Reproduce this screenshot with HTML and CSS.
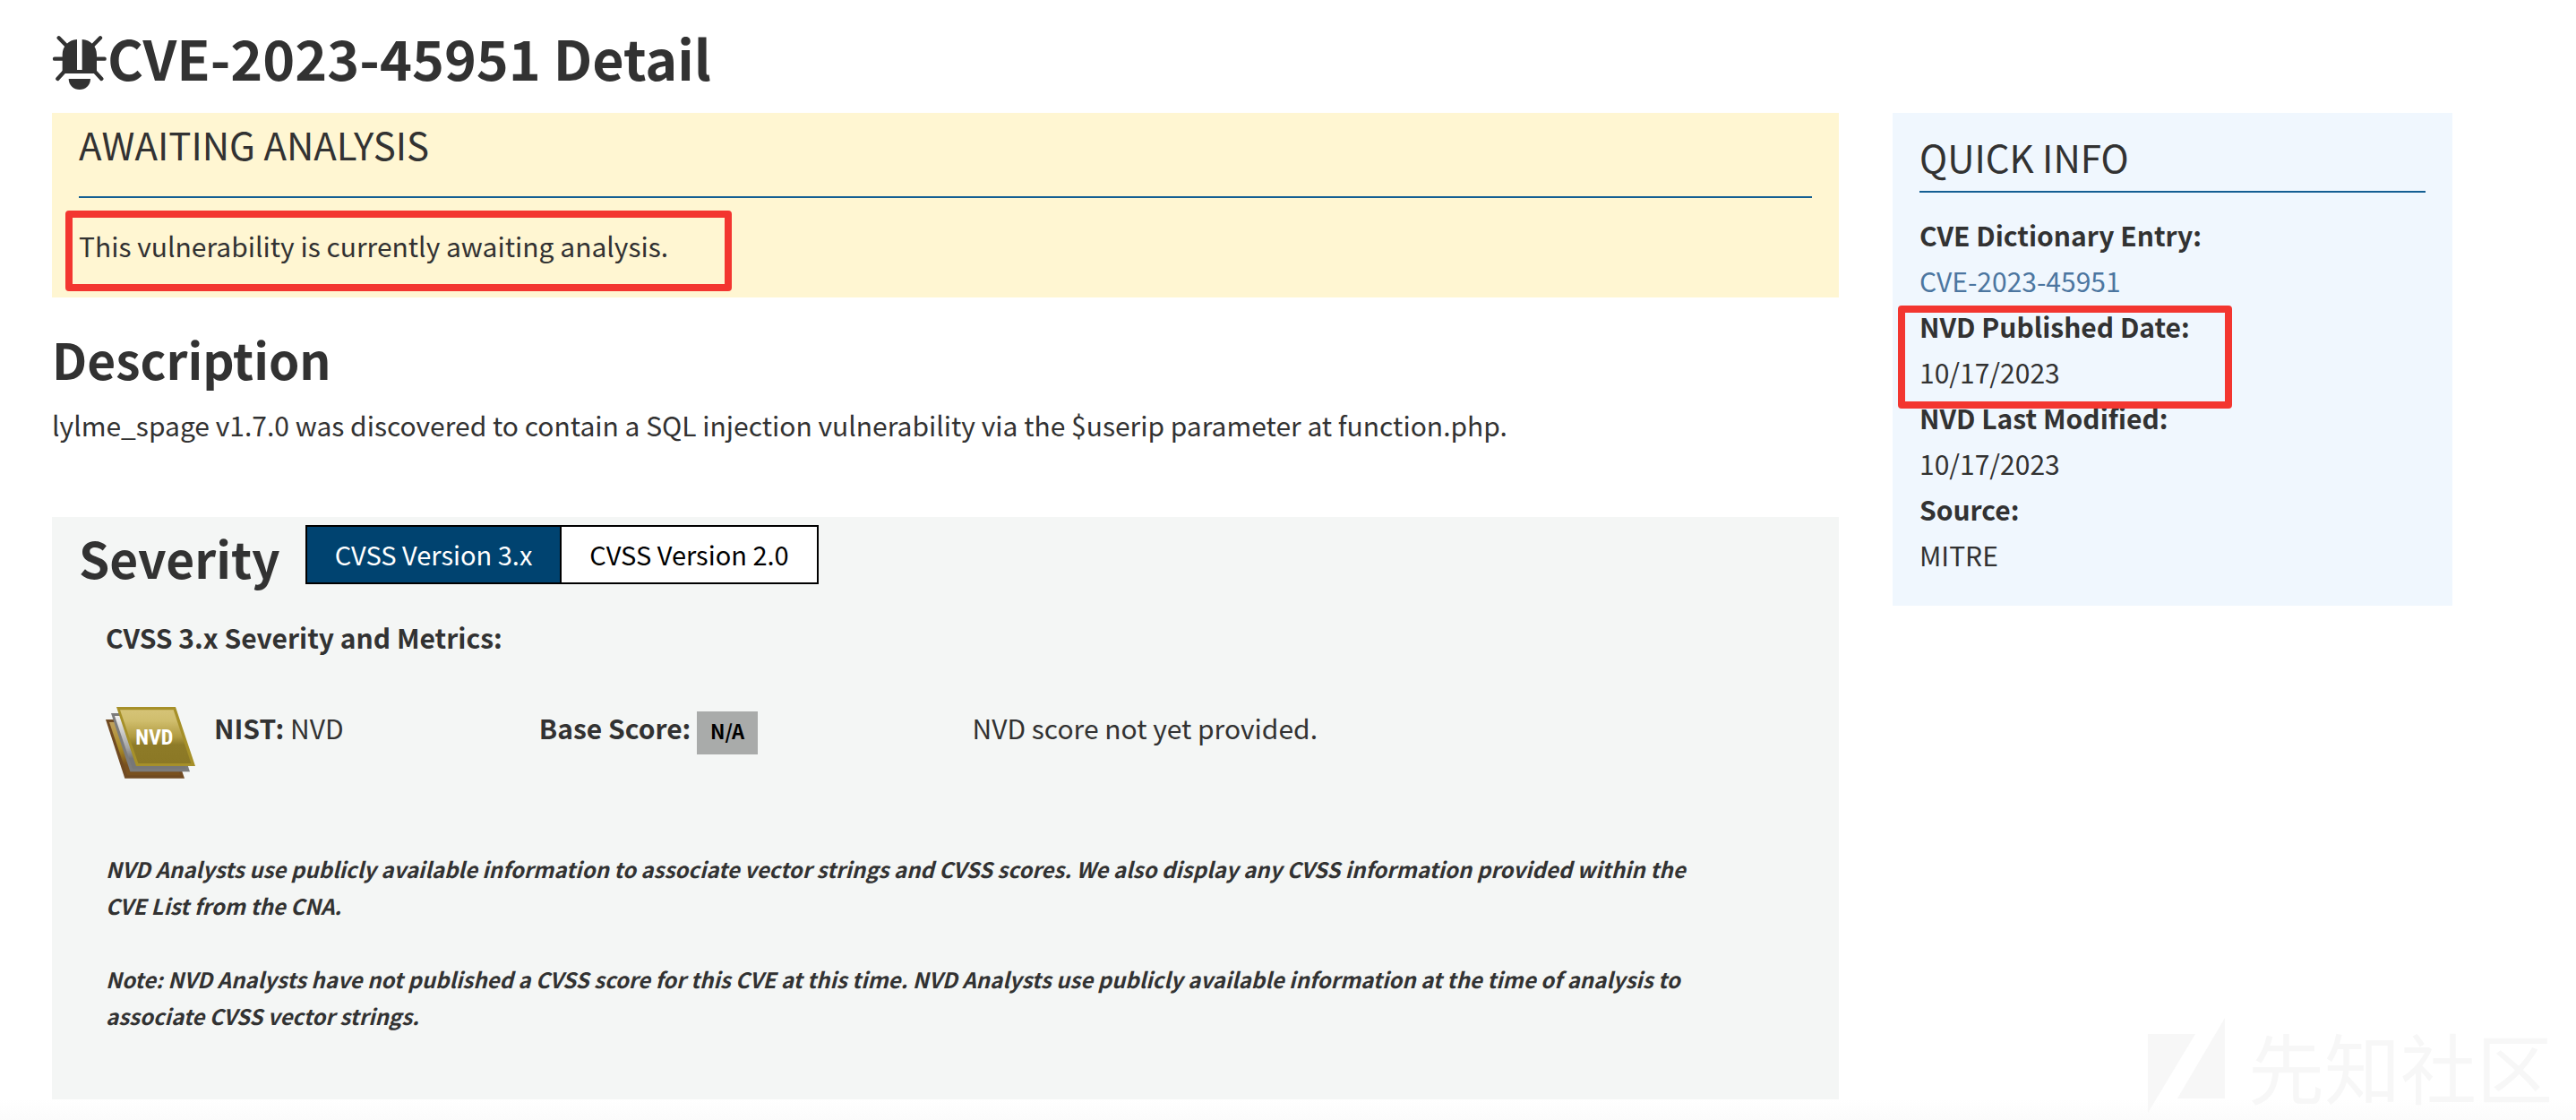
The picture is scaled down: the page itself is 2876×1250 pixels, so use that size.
FILE: index.html
```html
<!DOCTYPE html>
<html lang="en">
<head>
<meta charset="utf-8">
<title>CVE-2023-45951 Detail</title>
<meta name="viewport" content="width=device-width, initial-scale=1">
<link rel="stylesheet" href="styles.css">
</head>
<body>
<div class="page">
  <h1 class="page-title">
    <svg class="bug-icon" viewBox="58 60 182 180" aria-hidden="true">
      <g stroke="currentColor" stroke-width="13" stroke-linecap="round">
        <path d="M79 67 104 92M218 67 193 92M65 137H95M232 137H202M75 204 97 180M222 204 200 180"/>
      </g>
      <path fill="currentColor" d="M140 72V174H157V72C186 74 206 94 206 124V186H91V124C91 94 111 74 140 72Z"/>
      <path fill="currentColor" d="M112 204H185C185 226 168 240 148.500 240S112 226 112 204Z"/>
    </svg><span>CVE-2023-45951 Detail</span>
  </h1>
  <div class="columns">
    <main class="main">
      <section class="status">
        <h2 class="panel-title status-title">Awaiting Analysis</h2>
        <p class="status-text">This vulnerability is currently awaiting analysis.</p>
      </section>

      <h2 class="section-title">Description</h2>
      <p class="description">lylme_spage v1.7.0 was discovered to contain a SQL injection vulnerability via the $userip parameter at function.php.</p>

      <section class="severity">
        <div class="severity-head">
          <h2 class="severity-title">Severity</h2>
          <div class="versions">
            <button class="version active" type="button">CVSS Version 3.x</button>
            <button class="version" type="button">CVSS Version 2.0</button>
          </div>
        </div>
        <div class="metrics">
          <h3 class="metrics-title">CVSS 3.x Severity and Metrics:</h3>
          <div class="score-row">
            <div class="source">
              <svg class="nvd-icon" viewBox="54 87 300 240" role="img" aria-label="NVD">
                <defs>
                  <linearGradient id="gold" x1="0" y1="0" x2="0" y2="1">
                    <stop offset="0" stop-color="#d5c377"/>
                    <stop offset=".2" stop-color="#d0be6d"/>
                    <stop offset=".5" stop-color="#b19b42"/>
                    <stop offset=".65" stop-color="#8e7b28"/>
                    <stop offset="1" stop-color="#8b7825"/>
                  </linearGradient>
                  <linearGradient id="silver" x1="0" y1="0" x2="0" y2="1">
                    <stop offset="0" stop-color="#f2f2f2"/>
                    <stop offset=".6" stop-color="#a5a5a5"/>
                    <stop offset=".8" stop-color="#777"/>
                  </linearGradient>
                  <linearGradient id="bronze" x1="0" y1="0" x2="0" y2="1">
                    <stop offset="0" stop-color="#c0a05c"/>
                    <stop offset=".5" stop-color="#a98b25"/>
                    <stop offset=".8" stop-color="#79511f"/>
                  </linearGradient>
                </defs>
                <path fill="#704a22" d="M54 129H250L318 326H118Z"/>
                <path fill="url(#bronze)" d="M66 138H240L304 316H126Z"/>
                <path fill="#7c7c7c" d="M72 108H270L336 304H136Z"/>
                <path fill="url(#silver)" d="M84 117H260L324 295H144Z"/>
                <path fill="#a69029" d="M90 87H288L354 285H156Z"/>
                <path fill="url(#gold)" d="M102 97H281L340 276H163Z"/>
                <text class="nvd-label" x="217" y="212" text-anchor="middle">NVD</text>
              </svg>
              <p><strong>NIST:</strong> NVD</p>
            </div>
            <p class="base-score"><strong>Base Score:</strong> <span class="badge">N/A</span></p>
            <p>NVD score not yet provided.</p>
          </div>
          <p class="note">NVD Analysts use publicly available information to associate vector strings and CVSS scores. We also display any CVSS information provided within the CVE List from the CNA.</p>
          <p class="note">Note: NVD Analysts have not published a CVSS score for this CVE at this time. NVD Analysts use publicly available information at the time of analysis to associate CVSS vector strings.</p>
        </div>
      </section>
    </main>

    <aside class="side">
      <section class="quick-info">
        <h2 class="panel-title quick-title">Quick Info</h2>
        <dl class="facts">
          <div><dt>CVE Dictionary Entry:</dt><dd><a href="#CVE-2023-45951">CVE-2023-45951</a></dd></div>
          <div class="published"><dt>NVD Published Date:</dt><dd>10/17/2023</dd></div>
          <div><dt>NVD Last Modified:</dt><dd>10/17/2023</dd></div>
          <div><dt>Source:</dt><dd>MITRE</dd></div>
        </dl>
      </section>
    </aside>
  </div>
</div>
<div class="watermark" lang="zh">
  <svg class="watermark-logo" viewBox="0 0 86 106" aria-hidden="true"><path fill="currentColor" d="M0 18H53L0 106ZM86 0V90H33Z"/></svg>
  <span>先知社区</span>
</div>
</body>
</html>
```
FILE: styles.css
```css
* { box-sizing: border-box; }

body {
  margin: 0;
  background: #fff;
  color: #323232;
  font-family: "Noto Sans CJK SC", "Open Sans", sans-serif;
  font-size: 30px;
  line-height: 51px;
}

h1, h2, h3, p, dl, dd { margin: 0; }

a { color: #4c76a0; text-decoration: none; }

.page {
  padding: 28px 108px 25px 28px;
  background: linear-gradient(#fff, #fbfbfb) bottom / 100% 25px no-repeat;
}

.page-title {
  display: flex;
  align-items: center;
  margin: 0 30px 26px;
  font-size: 61px;
  line-height: 72px;
}

.bug-icon { width: 62px; height: 60px; margin-top: 12px; fill: none; }

.columns { display: flex; align-items: flex-start; }
.main { width: 75%; padding: 0 30px; }
.side { width: 25%; padding: 0 30px; }

.panel-title {
  border-bottom: 2px solid #145f93;
  font-size: 42px;
  font-weight: 400;
  line-height: 63px;
  text-transform: uppercase;
}

.status { padding: 3px 30px 32px; background: #fff6d2; }
.status-title { margin-bottom: 28px; padding-bottom: 27px; }

.status-text, .published { position: relative; width: fit-content; }

/* Red highlight frames drawn over the text */
.status-text::after, .published::after {
  content: "";
  position: absolute;
  border: 8px solid #f33630;
  border-radius: 4px;
}
.status-text::after { inset: -14px -71px -25px -15px; }
.published::after { inset: 2px -47px -15px -24px; }

.section-title {
  margin: 36px 0 17px;
  font-size: 55px;
  line-height: 64px;
}

.description { margin-bottom: 77px; }

.severity { padding: 9px 0 73px 30px; background: #f4f6f5; }

.severity-head { display: flex; align-items: flex-start; gap: 28px; }
.severity-title { font-size: 55px; line-height: 72px; }

.versions { display: flex; border: 2px solid #000; }

.version {
  padding: 0 31px 2px;
  border: 0;
  background: #fff;
  color: #000;
  font: inherit;
  font-size: 29px;
  line-height: 60px;
}
.version + .version { border-left: 2px solid #000; }
.version.active { background: #004370; color: #fff; }

.metrics { padding: 28px 0 0 30px; }
.metrics-title { font-size: 30px; }

.score-row {
  display: grid;
  grid-template-columns: 1fr 1fr 2fr;
  margin: 50px 0 80px;
}

.source { display: flex; gap: 21px; }
.nvd-icon { width: 100px; height: 80px; margin-top: 2px; }
.nvd-label {
  fill: #fff;
  font-family: "Liberation Sans Narrow", "Roboto Condensed", "Open Sans Condensed", "Liberation Sans", sans-serif;
  font-size: 72px;
  font-weight: 700;
}

.badge {
  display: inline-block;
  padding: 0 15px 6px;
  background: #a9abaa;
  color: #000;
  font-size: 22px;
  font-weight: 700;
  line-height: 42px;
}

.base-score { height: 51px; }

.note {
  max-width: 92%;
  font-size: 24px;
  font-style: italic;
  font-weight: 700;
  line-height: 41px;
}
.note + .note { margin-top: 41px; }

.quick-info { padding: 17px 30px 31px; background: #f0f7fe; }
.quick-title { margin-bottom: 22px; padding-bottom: 7px; }
.facts dt { font-weight: 700; }

.watermark {
  position: absolute;
  right: 26px;
  bottom: 8px;
  display: flex;
  align-items: center;
  gap: 26px;
  color: #f7f7f7;
  font-size: 85px;
  line-height: 106px;
}
.watermark-logo { width: 86px; height: 106px; }
```
